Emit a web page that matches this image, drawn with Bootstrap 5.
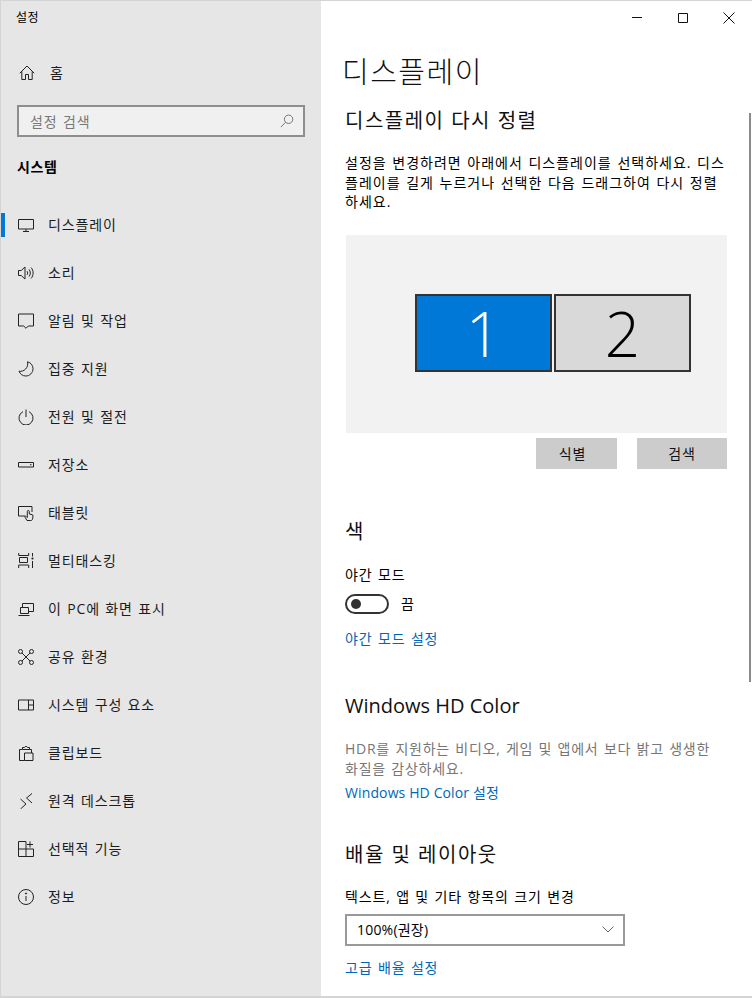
<!DOCTYPE html>
<html lang="ko">
<head>
    <meta charset="utf-8">
    <title>설정</title>
    <link rel="stylesheet" href="https://cdn.jsdelivr.net/npm/bootstrap@5.3.0/dist/css/bootstrap.min.css">
    <style>
        html, body { height: 100%; }
        body { background: #fff; color: #000; font-family: "Open Sans", "Noto Sans CJK KR", sans-serif; font-size: 14px; overflow: hidden; }
        .win { width: 752px; height: 998px; border: solid #d4d4d4; border-width: 1px 0 2px 1px; overflow: hidden; }
        .side { width: 320px; flex: none; background: #e6e6e6; height: 100%; }
        .side-title { height: 33px; padding: 8px 0 0 15px; font-size: 12px; line-height: 18px; letter-spacing: .4px; }
        .home-row { height: 48px; margin-top: 15px; padding-left: 18px; }
        .nav-ico { width: 16px; height: 16px; flex: none; fill: none; stroke: #222; stroke-width: 1; }
        .nav-txt { margin-left: 14px; line-height: 20px; color: #1c1c1c; letter-spacing: .85px; word-spacing: 1px; }
        .search-box { margin: 8px 16px 0 16px; height: 32px; width: 288px; border: 2px solid #8e8e8e; background: #f0f0f0; padding: 0 9px 0 11px; color: #777; letter-spacing: .85px; word-spacing: 1px; }
        .sys-head { margin: 18px 0 0 16px; height: 24px; font-weight: 700; line-height: 24px; letter-spacing: .6px; }
        .side-list { margin-top: 22px; }
        .side-item { height: 48px; padding-left: 17px; position: relative; }
        .side-item.on::before { content: ""; position: absolute; left: 0; top: 12px; width: 4px; height: 24px; background: #0078d7; }
        .main { flex: 1; position: relative; padding: 0 0 0 24px; height: 100%; overflow: hidden; }
        .caption { height: 33px; margin-left: -24px; }
        .cap-btn { width: 46px; height: 33px; }
        .cap-btn svg { width: 12px; height: 12px; fill: none; stroke: #111; stroke-width: 1; }
        .scroll-thumb { position: absolute; right: 1px; top: 112px; width: 2px; height: 569px; background: #8a8a8a; }
        .page-title { font-size: 29px; line-height: 38px; font-weight: 300; margin: 19px 0 0 -3px; color: #111; letter-spacing: 1.5px; }
        .sec-head { font-size: 20px; line-height: 28px; font-weight: 400; margin: 0; color: #111; letter-spacing: 1.5px; }
        .body-txt { line-height: 19.5px; width: 380px; letter-spacing: 1px; word-spacing: 1px; }
        .canvas { width: 381px; height: 198px; background: #f2f2f2; margin: 23px 0 0 1px; padding: 59px 0 0 69px; gap: 2px; }
        .mon { width: 137px; height: 78px; border: 2px solid #333; font-size: 62px; font-weight: 300; line-height: 1; }
        .mon.on { background: #0078d7; color: #fff; }
        .mon.off { background: #d9d9d9; color: #000; }
        .flat-btn { width: 81px; height: 31px; background: #ccc; color: #111; font-size: 14px; line-height: 31px; text-align: center; letter-spacing: .85px; padding-right: 8px; }
        .flat-btn.wide { width: 90px; margin-left: 20px; padding-right: 0; }
        .lnk { color: #0067b8; text-decoration: none; line-height: 20px; letter-spacing: .85px; word-spacing: 1px; }
        .lnk.latin { letter-spacing: .12px; word-spacing: 0; }
        .lab { line-height: 20px; letter-spacing: .85px; word-spacing: 1px; }
        .tog { width: 44px; height: 20px; border: 2px solid #333; border-radius: 10px; padding-left: 4px; }
        .tog i { display: block; width: 10px; height: 10px; border-radius: 50%; background: #333; }
        .hint { color: #767676; line-height: 20px; width: 375px; letter-spacing: .75px; word-spacing: 1px; }
        .combo { width: 280px; height: 32px; border: 2px solid #999; padding: 0 9px 0 10px; letter-spacing: .2px; }
    </style>
</head>
<body>
<div class="win d-flex">
    <div class="side">
        <div class="side-title">설정</div>
        <div class="home-row d-flex align-items-center">
            <svg class="nav-ico" viewBox="0 0 16 16"><path d="M.8 8.200 8 1l7.200 7.200M2.800 6.400v8.100h3.700V9.500h3v5h3.700V6.400"/></svg>
            <span class="nav-txt" style="margin-left:15px">홈</span>
        </div>
        <div class="search-box d-flex align-items-center justify-content-between">
            <span>설정 검색</span>
            <svg class="nav-ico" viewBox="0 0 16 16" style="stroke:#666;width:14px;height:14px"><circle cx="9.800" cy="6" r="4.800"/><path d="M6.300 9.500 1 15"/></svg>
        </div>
        <div class="sys-head">시스템</div>
        <div class="side-list">
            <div class="side-item on d-flex align-items-center">
                <svg class="nav-ico" viewBox="0 0 16 16"><path d="M.5 2.500h15v9.500H.5zM8 12v2.500M5 14.500h6"/></svg>
                <span class="nav-txt">디스플레이</span>
            </div>
            <div class="side-item d-flex align-items-center">
                <svg class="nav-ico" viewBox="0 0 16 16"><path d="M.5 5.500h2.700L7 2v12L3.200 10.500H.5zM9 6.200c.9 1 .9 2.600 0 3.600M11 4.400c1.800 2 1.800 5.200 0 7.200M13 2.500c2.800 3 2.800 8 0 11"/></svg>
                <span class="nav-txt">소리</span>
            </div>
            <div class="side-item d-flex align-items-center">
                <svg class="nav-ico" viewBox="0 0 16 16"><path d="M.5 1h15v12h-5.200L8 15.300 5.700 13H.5z"/></svg>
                <span class="nav-txt">알림 및 작업</span>
            </div>
            <div class="side-item d-flex align-items-center">
                <svg class="nav-ico" viewBox="0 0 16 16"><path d="M9.500.8c3.400.7 5.500 3.700 5.500 6.900 0 4-3.200 7.300-7.200 7.300-3.200 0-5.800-2-6.800-4.800 4.700 1.200 10-3.800 8.500-9.400z"/></svg>
                <span class="nav-txt">집중 지원</span>
            </div>
            <div class="side-item d-flex align-items-center">
                <svg class="nav-ico" viewBox="0 0 16 16"><path d="M5 2.700a7 7 0 1 0 6 0M8 .5v7.500"/></svg>
                <span class="nav-txt">전원 및 절전</span>
            </div>
            <div class="side-item d-flex align-items-center">
                <svg class="nav-ico" viewBox="0 0 16 16"><path d="M.5 5.500h15v4.500H.5zM12 7.700h1.500"/></svg>
                <span class="nav-txt">저장소</span>
            </div>
            <div class="side-item d-flex align-items-center">
                <svg class="nav-ico" viewBox="0 0 16 16"><path d="M7 11H.5V1.500H14V7M9 15.500 7 12.200c-.4-.8.500-1.400 1.100-.8l1.200 1.200V6.500a1 1 0 0 1 2 0V9l2.700.6c.8.200 1.100.7 1 1.400l-.4 2.900c-.2 1-.8 1.600-1.800 1.600z"/></svg>
                <span class="nav-txt">태블릿</span>
            </div>
            <div class="side-item d-flex align-items-center">
                <svg class="nav-ico" viewBox="0 0 16 16"><path d="M.7 0v2.500h10V0M1.500 4.500h8v5h-8zM.7 15v-3h10v3M14.500 0v3.500M14.500 8v7"/><circle cx="14.500" cy="5.500" r="1.100" fill="#222" stroke="none"/></svg>
                <span class="nav-txt">멀티태스킹</span>
            </div>
            <div class="side-item d-flex align-items-center">
                <svg class="nav-ico" viewBox="0 0 16 16"><path d="M4.500 6V2.500h11v8h-5M2.500 6.500h8v6h-8zM.5 14.500h11"/></svg>
                <span class="nav-txt">이 PC에 화면 표시</span>
            </div>
            <div class="side-item d-flex align-items-center">
                <svg class="nav-ico" viewBox="0 0 16 16"><circle cx="2.500" cy="2.500" r="2"/><circle cx="13.500" cy="2.500" r="2"/><circle cx="2.500" cy="13.500" r="2"/><circle cx="13.500" cy="13.500" r="2"/><path d="M4 4l8 8M12 4l-8 8"/></svg>
                <span class="nav-txt">공유 환경</span>
            </div>
            <div class="side-item d-flex align-items-center">
                <svg class="nav-ico" viewBox="0 0 16 16"><path d="M.5 3h15v10H.5zM10.500 3v10M10.500 8h5"/></svg>
                <span class="nav-txt">시스템 구성 요소</span>
            </div>
            <div class="side-item d-flex align-items-center">
                <svg class="nav-ico" viewBox="0 0 16 16"><path d="M4 4.500H1.500v11h5M6.500 8h8.500v7.500H6.500zM4.500 4.500v-2h2C7 1 9 1 9.500 2.500h2v2zM11.500 4.500h2V8"/></svg>
                <span class="nav-txt">클립보드</span>
            </div>
            <div class="side-item d-flex align-items-center">
                <svg class="nav-ico" viewBox="0 0 16 16"><path d="M2.500 6 8 11l-5.500 5M14 .5 8.500 5l5.500 5"/></svg>
                <span class="nav-txt">원격 데스크톱</span>
            </div>
            <div class="side-item d-flex align-items-center">
                <svg class="nav-ico" viewBox="0 0 16 16"><path d="M.5.5h7.500v15M.5.5v15h15V8H.5M12 .5v6M9 3.500h6"/></svg>
                <span class="nav-txt">선택적 기능</span>
            </div>
            <div class="side-item d-flex align-items-center">
                <svg class="nav-ico" viewBox="0 0 16 16"><circle cx="8" cy="8" r="7.500"/><path d="M8 7v5"/><circle cx="8" cy="4.500" r=".6" fill="#222"/></svg>
                <span class="nav-txt">정보</span>
            </div>
        </div>
    </div>
    <div class="main">
        <div class="caption d-flex justify-content-end">
            <div class="cap-btn d-flex align-items-center justify-content-center"><svg viewBox="0 0 12 12"><path d="M1 5.500h10"/></svg></div>
            <div class="cap-btn d-flex align-items-center justify-content-center"><svg viewBox="0 0 12 12"><path d="M1.500 1.500h9v9h-9z"/></svg></div>
            <div class="cap-btn d-flex align-items-center justify-content-center"><svg viewBox="0 0 12 12"><path d="M.5.500l11 11M11.500.5l-11 11"/></svg></div>
        </div>
        <div class="scroll-thumb"></div>
        <h1 class="page-title">디스플레이</h1>
        <h2 class="sec-head" style="margin-top:16px">디스플레이 다시 정렬</h2>
        <p class="body-txt mb-0" style="margin-top:18px">설정을 변경하려면 아래에서 디스플레이를 선택하세요. 디스플레이를 길게 누르거나 선택한 다음 드래그하여 다시 정렬하세요.</p>
        <div class="canvas d-flex align-items-start">
            <div class="mon on d-flex align-items-center justify-content-center">1</div>
            <div class="mon off d-flex align-items-center justify-content-center">2</div>
        </div>
        <div class="d-flex justify-content-end" style="width:382px;margin-top:5px">
            <div class="flat-btn">식별</div>
            <div class="flat-btn wide">검색</div>
        </div>
        <h2 class="sec-head" style="margin-top:49px">색</h2>
        <div class="lab" style="margin-top:19px">야간 모드</div>
        <div class="d-flex align-items-center" style="margin-top:9px">
            <div class="tog d-flex align-items-center"><i></i></div>
            <span class="lab ms-2 ps-1">끔</span>
        </div>
        <div style="margin-top:14px"><a class="lnk" href="#">야간 모드 설정</a></div>
        <h2 class="sec-head" style="margin-top:43px;letter-spacing:0">Windows HD Color</h2>
        <div class="hint" style="margin-top:19px">HDR를 지원하는 비디오, 게임 및 앱에서 보다 밝고 생생한 화질을 감상하세요.</div>
        <div style="margin-top:3px"><a class="lnk latin" href="#">Windows HD Color 설정</a></div>
        <h2 class="sec-head" style="margin-top:38px">배율 및 레이아웃</h2>
        <div class="lab" style="margin-top:18px">텍스트, 앱 및 기타 항목의 크기 변경</div>
        <div class="combo d-flex align-items-center justify-content-between" style="margin-top:7px">
            <span>100%(권장)</span>
            <svg viewBox="0 0 12 7" width="12" height="7" fill="none" stroke="#666"><path d="M.5.500 6 6 11.500.5"/></svg>
        </div>
        <div style="margin-top:11px"><a class="lnk" href="#">고급 배율 설정</a></div>
    </div>
</div>
<script src="https://cdn.jsdelivr.net/npm/bootstrap@5.3.0/dist/js/bootstrap.bundle.min.js"></script>
</body>
</html>
